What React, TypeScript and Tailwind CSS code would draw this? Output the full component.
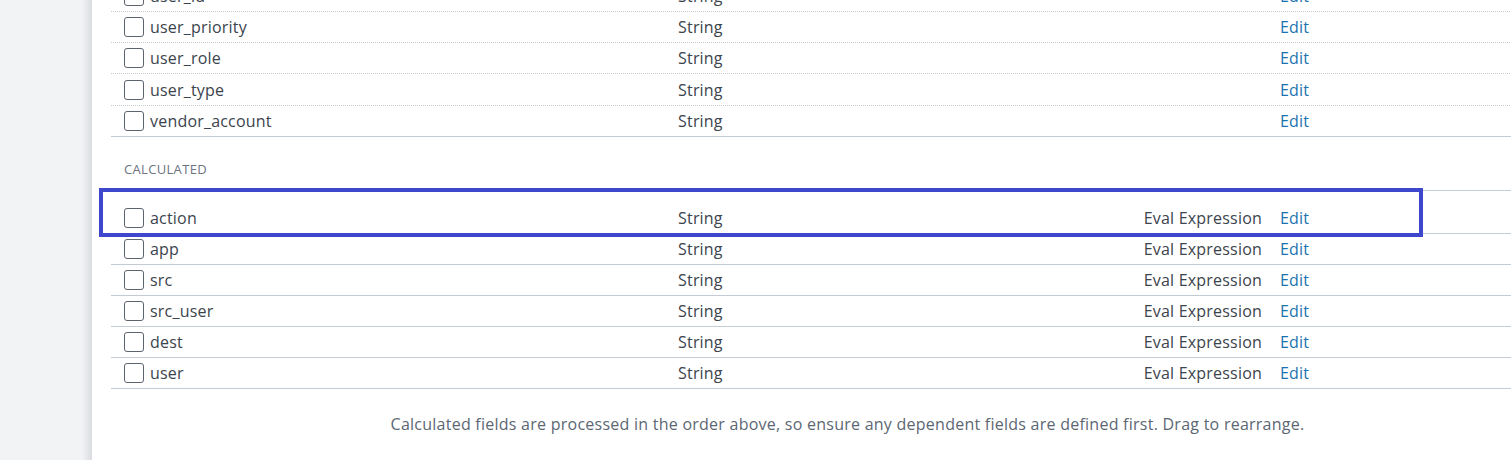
import React from "react";

type Field = { name: string; type: string; extra?: string; h?: string };

const baseFields: Field[] = [
  { name: "user_id", type: "String" },
  { name: "user_priority", type: "String" },
  { name: "user_role", type: "String" },
  { name: "user_type", type: "String", h: "h-[32px]" },
  { name: "vendor_account", type: "String" },
];

const calcFields: Field[] = [
  { name: "action", type: "String", extra: "Eval Expression" },
  { name: "app", type: "String", extra: "Eval Expression" },
  { name: "src", type: "String", extra: "Eval Expression" },
  { name: "src_user", type: "String", extra: "Eval Expression" },
  { name: "dest", type: "String", extra: "Eval Expression" },
  { name: "user", type: "String", extra: "Eval Expression" },
];

const Checkbox = () => (
  <span className="w-[20px] h-[20px] rounded-[3px] border-[1.5px] border-[#5c6470] bg-white shrink-0" />
);

const Row = ({ field, dotted, last, highlight }: { field: Field; dotted?: boolean; last?: boolean; highlight?: boolean }) => (
  <div
    className={
      "relative flex items-center pl-[13px] " +
      (field.h ?? "h-[31px]") +
      " " +
      (last ? "border-b border-[#c3cbd4]" : dotted ? "border-b border-dotted border-[#c3cbd4]" : "border-b border-[#c3cbd4]")
    }
  >
    <Checkbox />
    <span className="ml-[6px] w-[528px] shrink-0">{field.name}</span>
    <span className="w-[300px] shrink-0">{field.type}</span>
    <span className="w-[284px] shrink-0 text-right">{field.extra}</span>
    <a className="ml-[18px] text-[#1a73b0] cursor-pointer">Edit</a>
    {highlight && (
      <div className="absolute left-[-12px] top-[-15px] w-[1324px] h-[49px] border-[4px] border-[#3f47cc] pointer-events-none" />
    )}
  </div>
);

export default function App() {
  return (
    <div
      className="flex w-[1511px] h-[460px] overflow-hidden bg-[#f2f3f5] text-[16px] tracking-[0.2px] text-[#3c444d]"
      style={{ fontFamily: '"Open Sans", "Liberation Sans", sans-serif' }}
    >
      {/* side gutter */}
      <div className="w-[82px] shrink-0" />
      <div className="w-[10px] shrink-0 bg-gradient-to-r from-[#f2f3f5] to-[#d9dce0]" />

      {/* main panel */}
      <div className="flex-1 bg-white pl-[19px] overflow-hidden">
        <div className="w-[1473px] -mt-[19px]">
          {baseFields.map((f, i) => (
            <Row key={f.name} field={f} dotted last={i === baseFields.length - 1} />
          ))}

          <div className="pl-[13px] pt-[23px] pb-[10px] text-[13px] text-[#6b7480] tracking-wide uppercase">
            Calculated
          </div>

          <div className="border-t border-[#c3cbd4] h-[13px]" />
          {calcFields.map((f, i) => (
            <Row key={f.name} field={f} highlight={i === 0} />
          ))}

          <p className="pt-[23px] text-center text-[#5c6773] tracking-[0.25px]">
            Calculated fields are processed in the order above, so ensure any dependent fields are defined first. Drag to rearrange.
          </p>
        </div>
      </div>
    </div>
  );
}
